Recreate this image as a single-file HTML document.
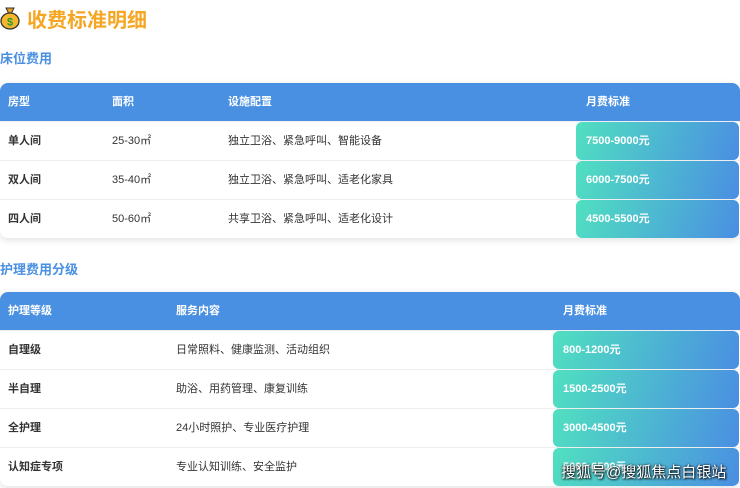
<!DOCTYPE html>
<html><head><meta charset="utf-8"><style>
*{margin:0;padding:0;box-sizing:border-box}
body{width:740px;height:488px;background:#fff;font-family:"Liberation Sans","Noto Sans CJK SC",sans-serif;position:relative;overflow:hidden;color:#333}
.h1{position:absolute;left:27px;top:4px;font-size:20px;font-weight:bold;color:#f5a623}
.ic{position:absolute;left:0;top:6px;width:20px;height:24px}
.h2{position:absolute;left:0;font-size:13px;font-weight:bold;color:#4a90e2}
.tbl{position:absolute;left:0;width:740px;border-radius:8px;box-shadow:0 2px 8px rgba(0,0,0,.12);overflow:hidden}
.hd{height:38px;background:#4a90e2;color:#fff;font-size:11px;font-weight:bold;position:relative}
.row{height:39px;position:relative;border-top:1px solid #eee;font-size:11px;background:#fff}
.c{position:absolute;top:0;line-height:38px;white-space:nowrap}
.b{font-weight:bold;color:#333}
.p{position:absolute;top:0;bottom:0;right:1px;border-radius:6px;background:linear-gradient(110deg,#50e0c0,#4a8ee2);color:#fff;font-weight:bold;line-height:38px;padding-left:10px}
.wm{position:absolute;left:561px;top:461px;font-size:15px;white-space:nowrap;color:#fff;text-shadow:1px 1px 2px #000,0 0 2px #000}
</style></head><body>
<svg class="ic" viewBox="0 0 20 24"><path d="M6 2h8l-2.5 5h-3z" fill="#e8a020" stroke="#333" stroke-width="1"/><ellipse cx="10" cy="15" rx="9" ry="8" fill="#f5b82a" stroke="#333" stroke-width="1.3"/><text x="10" y="19.5" font-size="11" text-anchor="middle" fill="#2a9a3a" font-weight="bold" font-family="Liberation Sans">$</text></svg>
<div class="h1">收费标准明细</div>
<div class="h2" style="top:48px">床位费用</div>
<div class="tbl" style="top:83px">
<div class="hd"><span class="c" style="left:8px">房型</span><span class="c" style="left:112px">面积</span><span class="c" style="left:228px">设施配置</span><span class="c" style="left:586px">月费标准</span></div>
<div class="row"><span class="c b" style="left:8px">单人间</span><span class="c" style="left:112px">25-30㎡</span><span class="c" style="left:228px">独立卫浴、紧急呼叫、智能设备</span><div class="p" style="left:576px">7500-9000元</div></div>
<div class="row"><span class="c b" style="left:8px">双人间</span><span class="c" style="left:112px">35-40㎡</span><span class="c" style="left:228px">独立卫浴、紧急呼叫、适老化家具</span><div class="p" style="left:576px">6000-7500元</div></div>
<div class="row"><span class="c b" style="left:8px">四人间</span><span class="c" style="left:112px">50-60㎡</span><span class="c" style="left:228px">共享卫浴、紧急呼叫、适老化设计</span><div class="p" style="left:576px">4500-5500元</div></div>
</div>
<div class="h2" style="top:259px">护理费用分级</div>
<div class="tbl" style="top:292px">
<div class="hd"><span class="c" style="left:8px">护理等级</span><span class="c" style="left:176px">服务内容</span><span class="c" style="left:563px">月费标准</span></div>
<div class="row"><span class="c b" style="left:8px">自理级</span><span class="c" style="left:176px">日常照料、健康监测、活动组织</span><div class="p" style="left:553px">800-1200元</div></div>
<div class="row"><span class="c b" style="left:8px">半自理</span><span class="c" style="left:176px">助浴、用药管理、康复训练</span><div class="p" style="left:553px">1500-2500元</div></div>
<div class="row"><span class="c b" style="left:8px">全护理</span><span class="c" style="left:176px">24小时照护、专业医疗护理</span><div class="p" style="left:553px">3000-4500元</div></div>
<div class="row"><span class="c b" style="left:8px">认知症专项</span><span class="c" style="left:176px">专业认知训练、安全监护</span><div class="p" style="left:553px">5000-6500元</div></div>
</div>
<div class="wm">搜狐号@搜狐焦点白银站</div>
</body></html>
